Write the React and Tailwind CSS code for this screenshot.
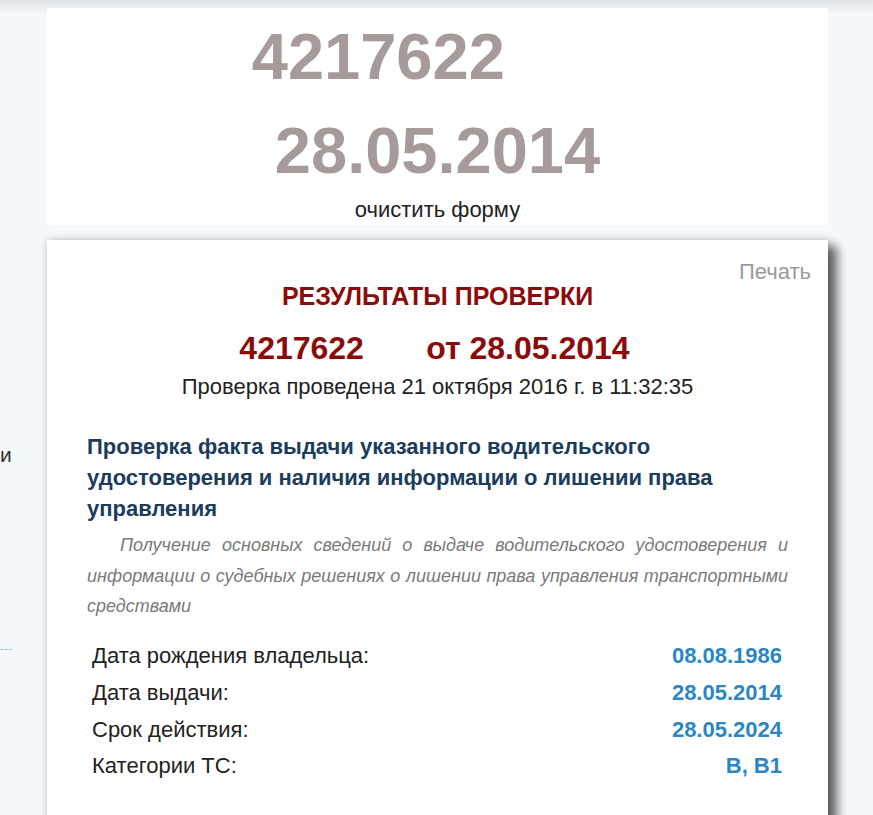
import React from "react";

const rows = [
  { label: "Дата рождения владельца:", value: "08.08.1986" },
  { label: "Дата выдачи:", value: "28.05.2014" },
  { label: "Срок действия:", value: "28.05.2024" },
  { label: "Категории ТС:", value: "B, B1" },
];

const App = () => {
  return (
    <div
      className="min-h-screen bg-[#f5f9fb] bg-[linear-gradient(to_bottom,#dfe3e6,#f5f9fb_14px)] flex overflow-hidden"
      style={{ fontFamily: '"Liberation Sans", Arial, sans-serif' }}
    >
      {/* left column, cut off */}
      <div className="w-[47px] shrink-0 flex flex-col">
        <div className="h-[441px]" />
        <div className="text-[21px] leading-[28px] text-[#333]">и</div>
        <div className="h-[180px]" />
        <div className="w-[12px] border-t border-dashed border-[#8dbde0]" />
      </div>

      <div className="w-[781px] shrink-0 flex flex-col">
        {/* Form panel */}
        <div className="bg-white mt-[8px] h-[217px] flex flex-col items-center pt-[16px]">
          <div className="text-[65px] leading-[65px] font-bold text-[#a69a9a] pr-[10px]">
            4217622<span className="text-white">000</span>
          </div>
          <div className="text-[65px] leading-[65px] font-bold text-[#a69a9a] mt-[29px]">
            28.05.2014
          </div>
          <div className="text-[22px] leading-[26px] text-[#222] mt-[14px]">очистить форму</div>
        </div>

        {/* Result card */}
        <div className="bg-white mt-[15px] shadow-[0_0_8px_rgba(0,0,0,0.18),9px_6px_10px_rgba(0,0,0,0.6)] px-[40px] pb-[60px]">
          <div className="flex justify-end -mr-[23px] pt-[20px]">
            <span className="text-[22px] leading-[24px] text-[#9a9a9a]">Печать</span>
          </div>
          <div className="text-center text-[25px] leading-[26px] font-bold text-[#8b0a0a] -mt-[1px]">
            РЕЗУЛЬТАТЫ ПРОВЕРКИ
          </div>
          <div className="text-center text-[32px] leading-[36px] font-bold text-[#8b0a0a] mt-[21px] pr-[6px]">
            4217622<span className="text-transparent">000</span> от 28.05.2014
          </div>
          <div className="text-center text-[22px] leading-[24px] text-[#222] mt-[9px]">
            Проверка проведена 21 октября 2016 г. в 11:32:35
          </div>

          <h2 className="mt-[32px] text-[22px] leading-[31px] font-bold text-[#1c3c5c]">
            Проверка факта выдачи указанного водительского удостоверения и наличия информации о лишении права
            управления
          </h2>
          <p className="mt-[6px] text-[18px] leading-[30.5px] italic text-[#7a7a7a] text-justify indent-[33px]">
            Получение основных сведений о выдаче водительского удостоверения и информации о судебных решениях о
            лишении права управления транспортными средствами
          </p>

          <div className="mt-[16px] flex flex-col">
            {rows.map((r) => (
              <div key={r.label} className="flex justify-between items-center h-[36.7px] pl-[5px] pr-[6px]">
                <span className="text-[22px] text-[#222]">{r.label}</span>
                <span className="text-[22px] font-bold text-[#2b86c5]">{r.value}</span>
              </div>
            ))}
          </div>
        </div>
      </div>
    </div>
  );
};

export default App;
